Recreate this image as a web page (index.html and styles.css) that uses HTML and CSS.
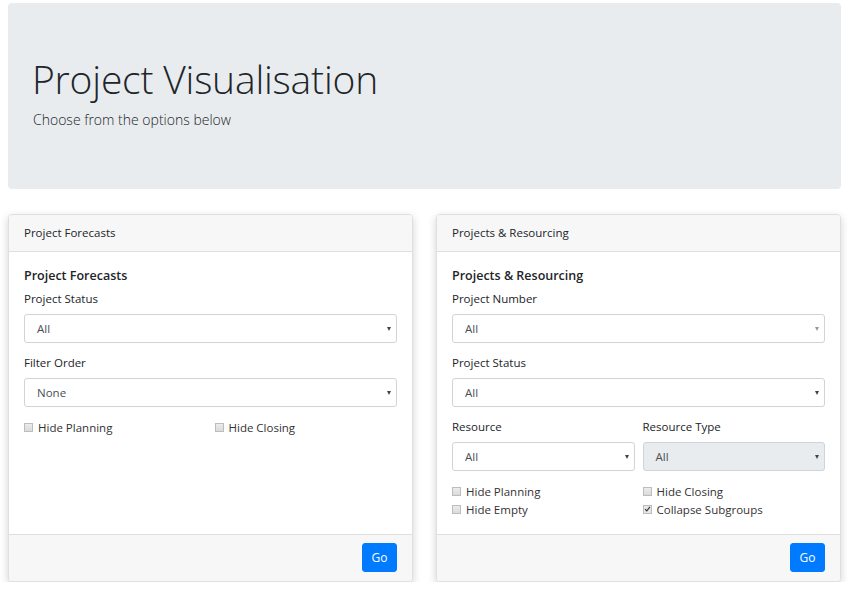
FILE: index.html
```html
<!DOCTYPE html>
<html>
<head>
<meta charset="utf-8">
<link rel="stylesheet" href="styles.css">
</head>
<body>
<div class="page">
  <div class="jumbotron">
    <h1 class="title">Project Visualisation</h1>
    <p class="lead">Choose from the options below</p>
  </div>
  <div class="cards">
    <div class="card">
      <div class="card-header">Project Forecasts</div>
      <div class="card-body">
        <h5 class="card-title">Project Forecasts</h5>
        <div class="group">
          <div class="label">Project Status</div>
          <div class="select"><span>All</span><span class="caret"></span></div>
        </div>
        <div class="group">
          <div class="label">Filter Order</div>
          <div class="select"><span>None</span><span class="caret"></span></div>
        </div>
        <div class="checks">
          <label class="check"><span class="box"></span>Hide Planning</label>
          <label class="check"><span class="box"></span>Hide Closing</label>
        </div>
      </div>
      <div class="card-footer"><button class="btn">Go</button></div>
    </div>
    <div class="card">
      <div class="card-header">Projects &amp; Resourcing</div>
      <div class="card-body">
        <h5 class="card-title">Projects &amp; Resourcing</h5>
        <div class="group">
          <div class="label">Project Number</div>
          <div class="select"><span>All</span><span class="caret light"></span></div>
        </div>
        <div class="group">
          <div class="label">Project Status</div>
          <div class="select"><span>All</span><span class="caret"></span></div>
        </div>
        <div class="row2 group">
          <div>
            <div class="label">Resource</div>
            <div class="select"><span>All</span><span class="caret"></span></div>
          </div>
          <div>
            <div class="label">Resource Type</div>
            <div class="select disabled"><span>All</span><span class="caret"></span></div>
          </div>
        </div>
        <div class="checks">
          <label class="check"><span class="box"></span>Hide Planning</label>
          <label class="check"><span class="box"></span>Hide Closing</label>
          <label class="check"><span class="box"></span>Hide Empty</label>
          <label class="check"><span class="box checked"><svg viewBox="0 0 10 10" width="8" height="8"><path d="M1.5 5.2 L4 7.6 L8.5 2" fill="none" stroke="#333" stroke-width="1.6"/></svg></span>Collapse Subgroups</label>
        </div>
      </div>
      <div class="card-footer"><button class="btn">Go</button></div>
    </div>
  </div>
</div>
</body>
</html>
```
FILE: styles.css
```css
* { box-sizing: border-box; }
html, body { margin: 0; padding: 0; background: #fff; }
body {
  font-family: "Open Sans", "Noto Sans", sans-serif;
  color: #212529;
  font-size: 12px;
}
.page {
  padding: 3px 9px 0 8px;
}
.jumbotron {
  background: #e9ecef;
  border-radius: 4px;
  height: 186px;
  padding: 48px 24px 0 24px;
}
.title {
  margin: 0;
  font-weight: 300;
  font-size: 39px;
  line-height: 56px;
  color: #212529;
  letter-spacing: -0.2px;
}
.lead {
  margin: 3px 0 0 1px;
  font-weight: 300;
  font-size: 14px;
  line-height: 20px;
}
.cards {
  margin-top: 25px;
  display: grid;
  grid-template-columns: 405px 405px;
  column-gap: 23px;
}
.card {
  display: flex;
  flex-direction: column;
  border: 1px solid #dfdfdf;
  border-radius: 4px;
  background: #fff;
  box-shadow: 0 3px 8px rgba(0,0,0,0.18);
  overflow: hidden;
}
.card-header {
  background: #f7f7f7;
  border-bottom: 1px solid #dfdfdf;
  height: 37px;
  padding: 0 15px;
  line-height: 36px;
  font-size: 11.5px;
}
.card-body {
  flex: 1;
  padding: 15px 15px 16px 15px;
}
.card-title {
  margin: 0 0 5px 0;
  font-size: 12.5px;
  font-weight: 600;
  line-height: 18px;
}
.group { margin-bottom: 11px; }
.label {
  font-size: 11.5px;
  line-height: 18px;
  margin-bottom: 6px;
}
.select {
  height: 29px;
  border: 1px solid #ced4da;
  border-radius: 3px;
  display: flex;
  align-items: center;
  justify-content: space-between;
  padding: 0 5px 0 12px;
  color: #495057;
  font-size: 11.5px;
  background: #fff;
}
.select.disabled { background: #e9ecef; }
.caret {
  width: 0; height: 0;
  border-left: 2.5px solid transparent;
  border-right: 2.5px solid transparent;
  border-top: 4px solid #444;
}
.caret.light { border-top-color: #999; }
.row2 {
  display: grid;
  grid-template-columns: 1fr 1fr;
  column-gap: 8px;
}
.checks {
  display: grid;
  grid-template-columns: 1fr 1fr;
  column-gap: 8px;
}
.check {
  display: flex;
  align-items: center;
  height: 18px;
  font-size: 11.5px;
  color: #333;
}
.box {
  width: 9px; height: 9px;
  border: 1px solid #bdbdbd;
  background: linear-gradient(#ececec, #dadada);
  margin-right: 5px;
  display: inline-flex;
  align-items: center;
  justify-content: center;
}
.box.checked { background: #e6e6e6; }
.card-footer {
  background: #f7f7f7;
  border-top: 1px solid #dfdfdf;
  height: 47px;
  padding: 8px 15px 0 15px;
  display: flex;
  justify-content: flex-end;
  align-items: flex-start;
}
.btn {
  background: #007bff;
  color: #fff;
  border: 1px solid #007bff;
  border-radius: 3px;
  height: 29px;
  width: 35px;
  font-family: "Open Sans", "Noto Sans", sans-serif;
  font-size: 12px;
  padding: 0;
}
```
